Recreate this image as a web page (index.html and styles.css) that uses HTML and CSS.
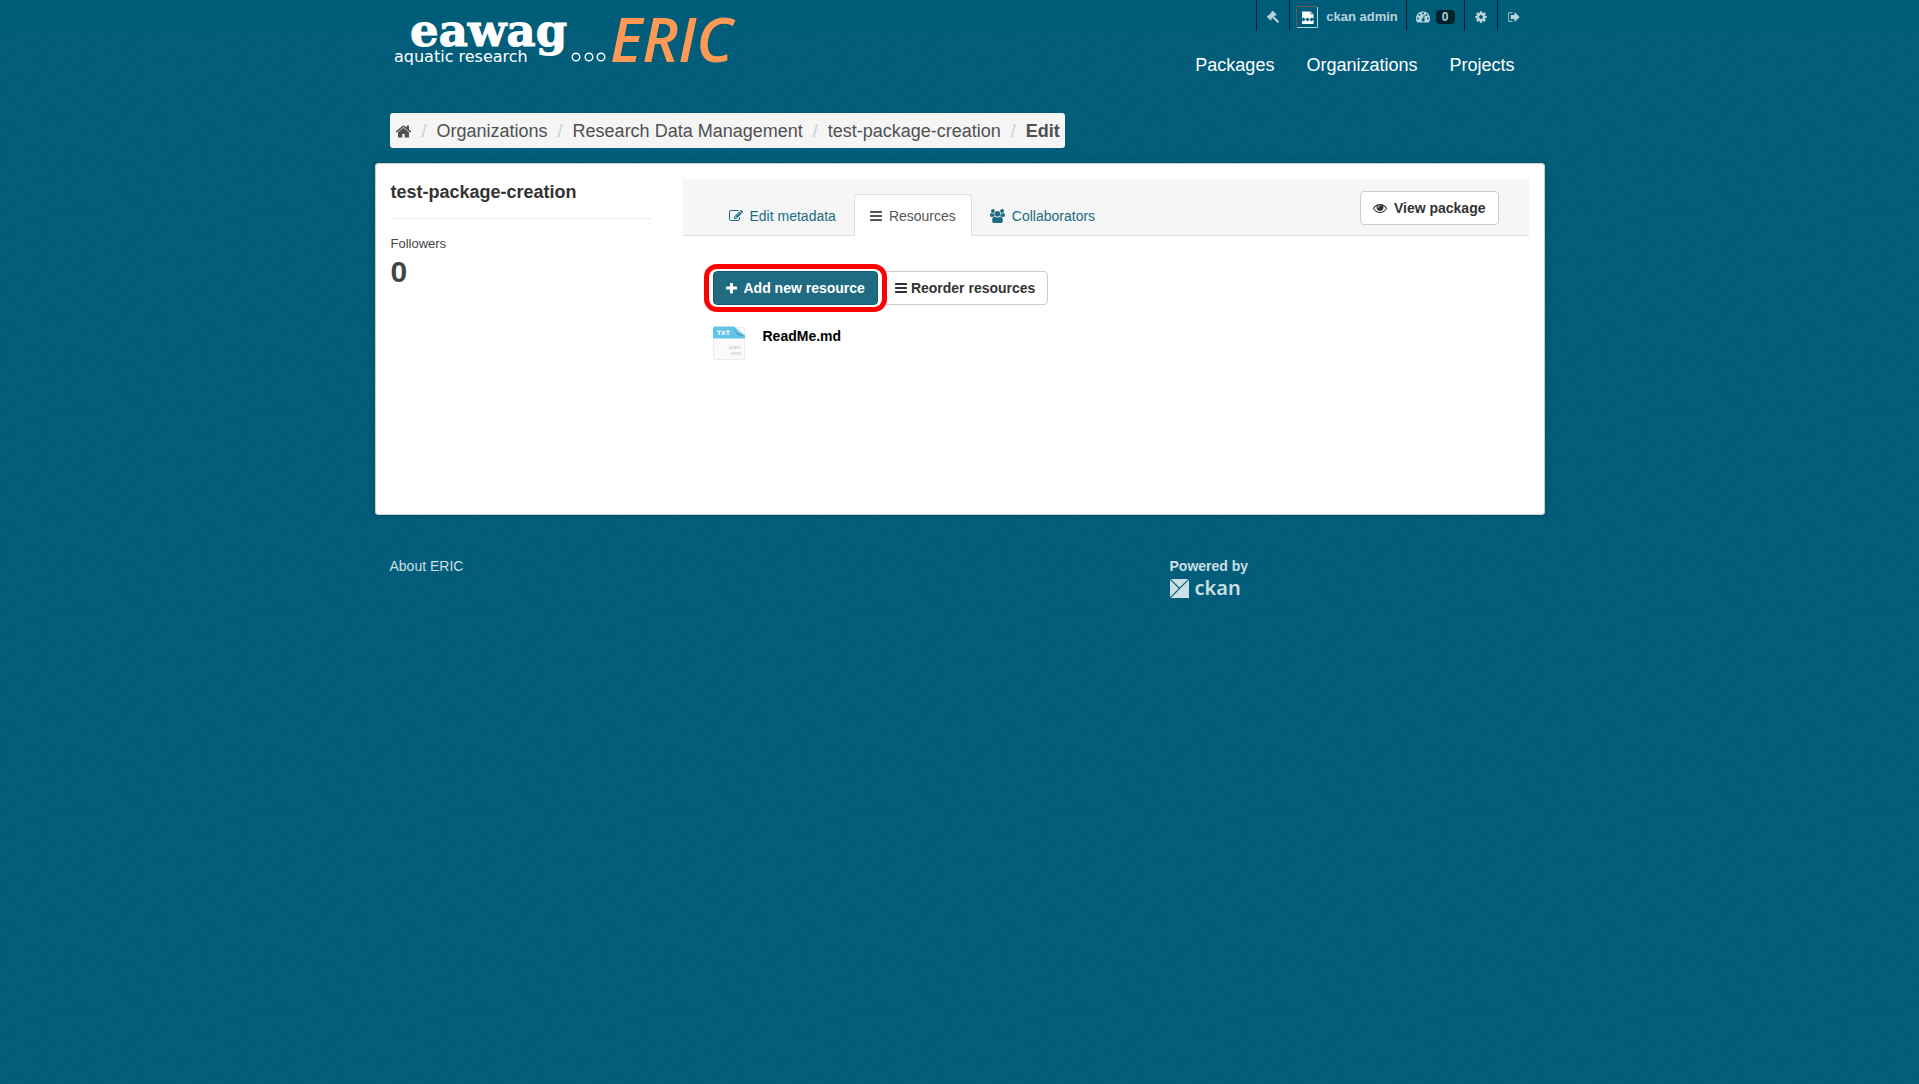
FILE: index.html
```html
<!DOCTYPE html>
<html lang="en">
<head>
<meta charset="utf-8">
<meta name="viewport" content="width=device-width, initial-scale=1">
<title>test-package-creation - Resources - ERIC</title>
<link rel="stylesheet" href="styles.css">
</head>
<body>
<svg class="defs" aria-hidden="true">
  <symbol id="bars" viewBox="0 0 1792 1792"><path d="M1664 1344v128q0 26-19 45t-45 19h-1408q-26 0-45-19t-19-45v-128q0-26 19-45t45-19h1408q26 0 45 19t19 45zm0-512v128q0 26-19 45t-45 19h-1408q-26 0-45-19t-19-45v-128q0-26 19-45t45-19h1408q26 0 45 19t19 45zm0-512v128q0 26-19 45t-45 19h-1408q-26 0-45-19t-19-45v-128q0-26 19-45t45-19h1408q26 0 45 19t19 45z"/></symbol>
</svg>

<header>
  <div class="account">
    <div class="container">
      <ul class="account-list">
        <li><a href="#" aria-label="Sysadmin settings"><svg class="icon" viewBox="0 0 13 13"><g transform="rotate(-45 5 5)"><rect x=".4" y="1.800" width="2" height="6.200" rx=".7"/><rect x="7.600" y="1.800" width="2" height="6.200" rx=".7"/><path d="M2 2.500h6v4.800H2z"/><rect x="3.900" y="7" width="2.300" height="8.600" rx="1"/></g></svg></a></li>
        <li><a href="#" class="user"><svg class="avatar" viewBox="0 0 22 22"><path d="M.5 21V.5H21" fill="none" stroke="#6b5558"/><path d="M21.500 1v20.500H1" fill="none" stroke="#b9d3db"/><path d="M6 5.500h8.500l3 3v4l-2-1-2 2-2-2-2 2-2-2-1.500 1z" fill="#fff"/><path d="M14 5v4h4z" fill="#9fb9c2"/><path d="M6 14l1.500 1.500 2-2 2 2 2-2 2 2 2-2V18H6z" fill="#fff"/></svg><span>ckan admin</span></a></li>
        <li><a href="#" class="dash" aria-label="Dashboard, 0 new activities"><svg class="icon icon-wide" viewBox="0 0 14 14"><path fill-rule="evenodd" d="M7 1.500a7 7 0 0 1 5.900 10.800q-.2.300-.6.300H1.700q-.4 0-.6-.3A7 7 0 0 1 7 1.500zM2 7.500a1 1 0 1 0 0 2 1 1 0 0 0 0-2zM3.500 4a1 1 0 1 0 0 2 1 1 0 0 0 0-2zM7 2.500a1 1 0 1 0 0 2 1 1 0 0 0 0-2zM10.500 4a1 1 0 1 0 0 2 1 1 0 0 0 0-2zM12 7.500a1 1 0 1 0 0 2 1 1 0 0 0 0-2zM7.900 5.300l-.8 3a1.500 1.500 0 1 0 .9.200l.8-3z"/></svg><span class="badge">0</span></a></li>
        <li><a href="#" aria-label="Profile settings"><svg class="icon" viewBox="96 96 1600 1600"><path d="M1152 896q0-106-75-181t-181-75-181 75-75 181 75 181 181 75 181-75 75-181zm512-109v222q0 12-8 23t-20 13l-185 28q-19 54-39 91 35 50 107 138 10 12 10 25t-9 23q-27 37-99 108t-94 71q-12 0-26-9l-138-108q-44 23-91 38-16 136-29 186-7 28-36 28h-222q-14 0-24.500-8.500t-11.500-21.500l-28-184q-49-16-90-37l-141 107q-10 9-25 9-14 0-25-11-126-114-165-168-7-10-7-23 0-12 8-23 15-21 51-66.500t54-70.500q-27-50-41-99l-183-27q-13-2-21-12.500t-8-23.500v-222q0-12 8-23t19-13l186-28q14-46 39-92-40-57-107-138-10-12-10-24 0-10 9-23 26-36 98.500-107.500t94.500-71.500q13 0 26 10l138 107q44-23 91-38 16-136 29-186 7-28 36-28h222q14 0 24.500 8.500t11.500 21.500l28 184q49 16 90 37l142-107q9-9 24-9 13 0 25 10 129 119 165 170 7 8 7 22 0 12-8 23-15 21-51 66.500t-54 70.500q26 50 41 98l183 28q13 2 21 12.500t8 23.500z"/></svg></a></li>
        <li><a href="#" aria-label="Log out"><svg class="icon" viewBox="96 96 1600 1600"><path d="M704 1440q0 4 1 20t.5 26.500-3 23.500-10 19.500-20.500 6.500h-320q-119 0-203.500-84.500t-84.500-203.500v-704q0-119 84.500-203.500t203.500-84.500h320q13 0 22.500 9.500t9.500 22.500q0 4 1 20t.5 26.500-3 23.500-10 19.500-20.500 6.500h-320q-66 0-113 47t-47 113v704q0 66 47 113t113 47h312l11.500 1 11.500 3 8 5.500 7 9 2 13.500zm928-544q0 26-19 45l-544 544q-19 19-45 19t-45-19-19-45v-288h-448q-26 0-45-19t-19-45v-384q0-26 19-45t45-19h448v-288q0-26 19-45t45-19 45 19l544 544q19 19 19 45z"/></svg></a></li>
      </ul>
    </div>
  </div>
  <div class="container masthead">
    <a href="#" class="logo" aria-label="Eawag ERIC home">
      <svg width="352" height="60" viewBox="0 0 352 60">
        <text class="logo-eawag" x="20" y="38">eawag</text>
        <text class="logo-sub" x="4" y="54">aquatic research</text>
        <g fill="none" stroke="#fff" stroke-width="1.400"><circle cx="186" cy="49" r="3.800"/><circle cx="199" cy="49" r="3.800"/><circle cx="211" cy="49" r="3.800"/></g>
        <text class="logo-eric" x="220" y="54">ERIC</text>
      </svg>
    </a>
    <nav>
      <a href="#">Packages</a>
      <a href="#">Organizations</a>
      <a href="#">Projects</a>
    </nav>
  </div>
</header>

<main class="container">
  <nav class="crumbs" aria-label="Breadcrumb">
    <ol>
      <li><a href="#" aria-label="Home"><svg class="home" viewBox="0 0 1792 1792"><path d="M1472 992v480q0 26-19 45t-45 19h-384v-384h-256v384h-384q-26 0-45-19t-19-45v-480q0-1 .5-3t.5-3l575-474 575 474q1 2 1 6zm223-69l-62 74q-8 9-21 11h-3q-13 0-21-7l-692-577-692 577q-12 8-24 7-13-2-21-11l-62-74q-8-10-7-23.500t11-21.500l719-599q32-26 76-26t76 26l244 204v-195q0-14 9-23t23-9h192q14 0 23 9t9 23v408l219 182q10 8 11 21.500t-7 23.500z"/></svg></a></li>
      <li><a href="#">Organizations</a></li>
      <li><a href="#">Research Data Management</a></li>
      <li><a href="#">test-package-creation</a></li>
      <li><a href="#" class="current">Edit</a></li>
    </ol>
  </nav>

  <div class="panel">
    <aside>
      <h1>test-package-creation</h1>
      <dl>
        <dt>Followers</dt>
        <dd>0</dd>
      </dl>
    </aside>
    <article>
      <div class="page-header">
        <ul class="tabs">
          <li><a href="#"><svg class="glyph" viewBox="0 0 1792 1792"><path d="M888 1184l116-116-152-152-116 116v56h96v96h56zm440-720q-16-16-33 1l-350 350q-17 17-1 33t33-1l350-350q17-17 1-33zm80 594v190q0 119-84.500 203.500t-203.500 84.500h-832q-119 0-203.500-84.500t-84.500-203.500v-832q0-119 84.500-203.500t203.500-84.500h832q63 0 117 25 15 7 18 23 3 17-9 29l-49 49q-14 14-32 8-23-6-45-6h-832q-66 0-113 47t-47 113v832q0 66 47 113t113 47h832q66 0 113-47t47-113v-126q0-13 9-22l64-64q15-15 35-7t20 29zm-96-738l288 288-672 672h-288v-288zm444 132l-92 92-288-288 92-92q28-28 68-28t68 28l152 152q28 28 28 68t-28 68z"/></svg>Edit metadata</a></li>
          <li class="active"><a href="#"><svg class="glyph-bars"><use href="#bars"/></svg>Resources</a></li>
          <li><a href="#"><svg class="glyph-users" viewBox="0 0 15 14"><circle cx="2.900" cy="2" r="1.900"/><circle cx="12.100" cy="2" r="1.900"/><path d="M0 6.300q0-2.400 1.300-2.400 1.600.9 3 .3-.4 1.700.6 2.900-1.300 0-2.300 1H1.500Q0 8 0 6.300zM15 6.300q0-2.400-1.300-2.400-1.600.9-3 .3.4 1.700-.6 2.900 1.300 0 2.300 1h1.100Q15 8 15 6.300z"/><circle cx="7.500" cy="4.700" r="2.800"/><path d="M2.100 11.700q0-4 2.500-4.200 2.900 2 5.800 0 2.500.2 2.500 4.200 0 2.300-2.200 2.300H4.300q-2.200 0-2.200-2.300z"/></svg>Collaborators</a></li>
        </ul>
        <button type="button" class="btn"><svg class="glyph" viewBox="0 0 1792 1792"><path d="M1664 960q-152-236-381-353 61 104 61 225 0 185-131.500 316.500t-316.500 131.500-316.500-131.500-131.500-316.500q0-121 61-225-229 117-381 353 133 205 333.500 326.500t434.500 121.500 434.500-121.500 333.500-326.500zm-720-384q0-20-14-34t-34-14q-125 0-214.500 89.500t-89.500 214.500q0 20 14 34t34 14 34-14 14-34q0-86 61-147t147-61q20 0 34-14t14-34zm848 384q0 34-20 69-140 230-376.500 368.500t-499.500 138.500-499.500-139-376.500-368q-20-35-20-69t20-69q140-229 376.500-368t499.500-139 499.500 139 376.500 368q20 35 20 69z"/></svg>View package</button>
      </div>
      <div class="content">
        <div class="actions">
          <div class="marked"><button type="button" class="btn primary"><svg class="glyph-plus" viewBox="192 192 1408 1408"><path d="M1600 736v192q0 40-28 68t-68 28h-416v416q0 40-28 68t-68 28h-192q-40 0-68-28t-28-68v-416h-416q-40 0-68-28t-28-68v-192q0-40 28-68t68-28h416v-416q0-40 28-68t68-28h192q40 0 68 28t28 68v416h416q40 0 68 28t28 68z"/></svg>Add new resource</button></div>
          <button type="button" class="btn reorder"><svg class="glyph-bars"><use href="#bars"/></svg>Reorder resources</button>
        </div>
        <ul class="resources">
          <li><a href="#">
            <svg width="32" height="34" viewBox="0 0 32 34" aria-hidden="true"><rect x=".5" y="1.500" width="31" height="32" rx="1.500" fill="#fafafa" stroke="#ececec"/><path d="M0 12.500V2Q0 .5 1.500.5H21l11 9v3z" fill="#62c3e6"/><path d="M20 .5q4 1 5 6.500 4-1 7 2.500z" fill="#8bd3ec"/><path d="M21 2q3 6 10.500 8-4 1-8-2z" fill="#4a9fc0"/><text class="file-type" x="4" y="9">TXT</text><text class="file-note" x="28" y="23" text-anchor="end">plain</text><text class="file-note" x="28" y="29" text-anchor="end">text</text></svg>
            <span>ReadMe.md</span></a></li>
        </ul>
      </div>
    </article>
  </div>
</main>

<footer class="container">
  <div><a href="#">About ERIC</a></div>
  <div>
    <strong>Powered by</strong>
    <a href="#" class="ckan"><svg width="19" height="19" viewBox="0 0 19 19" aria-hidden="true"><path d="M0 0h19v19H0z" fill="#ccdfe4"/><path d="M0 0l9.500 9.500M19 0L0 19" stroke="#005d7a" stroke-width="1.200"/></svg><span>ckan</span></a>
  </div>
</footer>
</body>
</html>
```
FILE: styles.css
```css
* { box-sizing: border-box; }

body {
  margin: 0;
  min-height: 100vh;
  color: #444;
  font: 14px/20px "Liberation Sans", Arial, sans-serif;
  background: #005b78 url("data:image/svg+xml,%3Csvg xmlns='http://www.w3.org/2000/svg' width='100' height='100'%3E%3Cfilter id='n' x='0' y='0' width='100%25' height='100%25' color-interpolation-filters='sRGB'%3E%3CfeTurbulence type='fractalNoise' baseFrequency='.5' numOctaves='2' stitchTiles='stitch'/%3E%3CfeColorMatrix values='0 0 0 0 .06 0 0 0 0 .42 0 0 0 0 .53 .8 0 0 0 -.25'/%3E%3C/filter%3E%3Crect width='100' height='100' filter='url(%23n)'/%3E%3C/svg%3E");
}

ul, ol, dl, dd { margin: 0; padding: 0; list-style: none; }
a { color: inherit; text-decoration: none; }
svg { flex: none; fill: currentColor; }
.defs { position: absolute; width: 0; height: 0; }

.container { width: 100%; max-width: 1170px; margin: 0 auto; padding: 0 15px; }

/* Account bar */
.account { background: #005d7a; color: #b9d3db; font-size: 13px; font-weight: bold; }
.account-list { display: flex; justify-content: flex-end; }
.account-list li { border-left: 1px solid #00232e; }
.account-list a { display: flex; align-items: center; height: 31px; padding: 2px 10px 0; }
.account-list .user { gap: 8px; padding: 2px 8px 0 6px; }
.account-list .dash { gap: 6px; padding: 2px 9px 0; }
.icon { width: 12px; height: 12px; }
.icon-wide { width: 14px; height: 14px; }
.avatar { width: 22px; height: 22px; }
.badge {
  padding: 0 6px;
  border-radius: 4px;
  background: #00232e;
  font-size: 12px;
  line-height: 14px;
}

/* Masthead */
.masthead { display: flex; justify-content: space-between; height: 82px; }
.logo { height: 60px; margin-top: -23px; }
.logo svg { overflow: visible; }
.logo-eawag { font: bold 45px "DejaVu Serif", serif; fill: #fff; stroke: #fff; stroke-width: 1px; }
.logo-sub { font: 16px "DejaVu Sans", sans-serif; fill: #fff; }
.logo-eric { font: italic 600 61px "Open Sans", sans-serif; fill: #ff9955; }
.masthead nav { display: flex; gap: 2px; padding-top: 18px; color: #fff; font-size: 18px; line-height: 32px; }
.masthead nav a { height: 32px; padding: 0 15px; }

/* Breadcrumb */
.crumbs { display: flex; margin-bottom: 15px; }
.crumbs ol {
  display: flex;
  flex-wrap: wrap;
  padding: 1px 5px 0;
  border-radius: 3px;
  background: #f5f5f5;
  color: #505050;
  font-size: 18px;
  line-height: 34px;
}
.crumbs li { display: flex; align-items: center; }
.crumbs li + li::before { content: "/"; padding: 0 10px; color: #ccc; }
.crumbs a { display: flex; }
.current { font-weight: bold; }
.home { width: 17px; height: 17px; }

/* Panel */
.panel {
  display: grid;
  grid-template-columns: 260px 1fr;
  gap: 32px;
  min-height: 352px;
  margin: 0 -15px;
  padding: 15px;
  border: 1px solid #ccc;
  border-radius: 3px;
  background: #fff;
  box-shadow: 0 0 0 4px rgba(0, 0, 0, .05);
}
h1 {
  margin: 0;
  padding: 1px 0 13px;
  border-bottom: 1px dotted #ddd;
  color: #333;
  font-size: 18px;
  line-height: 25px;
}
dl { padding-top: 15px; }
dt { font-size: 13px; }
dd { font-size: 30px; font-weight: bold; line-height: 36px; }

.page-header {
  display: flex;
  flex-wrap: wrap;
  justify-content: space-between;
  padding: 15px 30px 0;
  border-bottom: 1px solid #ddd;
  background: #f6f6f6;
}
.tabs { display: flex; gap: 2px; margin-bottom: -1px; color: #206b82; }
.tabs a {
  display: flex;
  align-items: center;
  gap: 7px;
  padding: 11px 15px 9px;
  border: 1px solid transparent;
}
.tabs .active a {
  border-color: #ddd #ddd #fff;
  border-radius: 4px 4px 0 0;
  background: #fff;
  color: #555;
}
.page-header .btn { margin-top: -3px; }

.glyph { width: 14px; height: 14px; }
.glyph-bars { width: 14px; height: 14px; margin: 0 -1px; }
.glyph-users { width: 15px; height: 14px; }
.glyph-plus { width: 11px; height: 11px; }

.btn {
  display: flex;
  align-items: center;
  gap: 7px;
  height: 34px;
  padding: 0 12px;
  border: 1px solid #ccc;
  border-radius: 4px;
  background: #fff;
  color: #333;
  font: bold 14px/20px "Liberation Sans", Arial, sans-serif;
}
.btn.primary { border-color: #1b5a6e; background: #206b82; color: #fff; }
.btn.reorder { gap: 4px; }

.content { padding: 35px 30px; }
.actions { display: flex; gap: 4px; }
.marked { position: relative; }
.marked::after {
  content: "";
  position: absolute;
  inset: -7px -9px;
  border: 5px solid #f00;
  border-radius: 13px;
  box-shadow: inset 0 0 0 2px #fff;
  pointer-events: none;
}
.resources { padding-top: 21px; }
.resources a { display: flex; gap: 18px; color: #000; font-weight: bold; }
.file-type { font: bold 6px "DejaVu Sans", sans-serif; fill: #fff; }
.file-note { font: 5px "DejaVu Sans", sans-serif; fill: #bbb; }

/* Footer */
footer.container {
  display: grid;
  grid-template-columns: 2fr 1fr;
  max-width: 1170px;
  padding: 41px 0 20px;
  color: #ccdfe4;
}
footer > div { padding: 0 15px; }
.ckan { display: flex; align-items: center; gap: 6px; height: 24px; font: 600 20px/24px "Noto Sans", sans-serif; }
```
